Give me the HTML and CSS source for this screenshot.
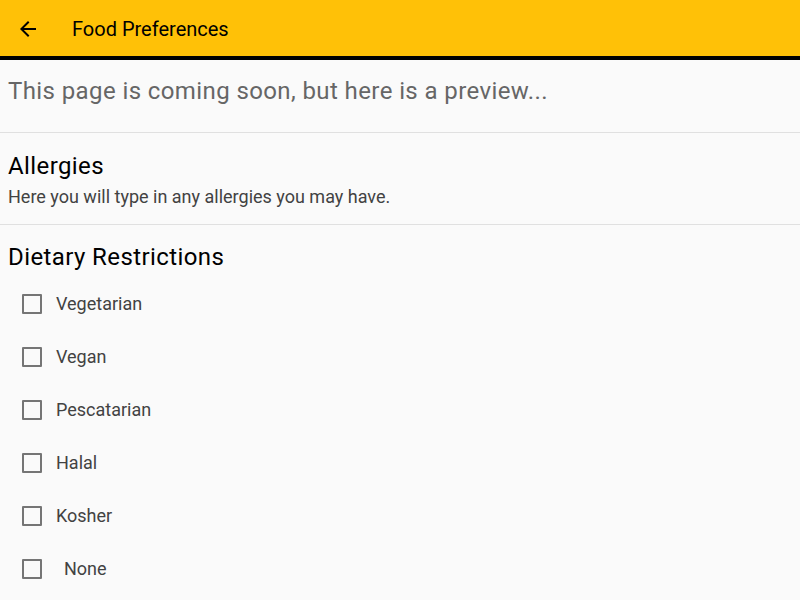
FILE: index.html
```html
<!DOCTYPE html>
<html>
<head>
<meta charset="utf-8">
<link rel="stylesheet" href="styles.css">
</head>
<body>
<header class="appbar">
  <svg class="back" width="24" height="24" viewBox="0 0 24 24"><path d="M20 11H7.83l5.59-5.59L12 4l-8 8 8 8 1.41-1.41L7.83 13H20v-2z" fill="#000"/></svg>
  <h1 class="title">Food Preferences</h1>
</header>
<main>
  <p class="notice">This page is coming soon, but here is a preview...</p>
  <section class="section allergies">
    <h2 class="heading">Allergies</h2>
    <p class="sub">Here you will type in any allergies you may have.</p>
  </section>
  <section class="section diet">
    <h2 class="heading">Dietary Restrictions</h2>
    <ul class="options">
      <li class="option"><span class="box"></span><span class="label">Vegetarian</span></li>
      <li class="option"><span class="box"></span><span class="label">Vegan</span></li>
      <li class="option"><span class="box"></span><span class="label">Pescatarian</span></li>
      <li class="option"><span class="box"></span><span class="label">Halal</span></li>
      <li class="option"><span class="box"></span><span class="label">Kosher</span></li>
      <li class="option"><span class="box"></span><span class="label indent">None</span></li>
    </ul>
  </section>
</main>
</body>
</html>
```

FILE: styles.css
```css
* { box-sizing: border-box; }
html, body { margin: 0; padding: 0; }
body {
  width: 800px;
  height: 600px;
  overflow: hidden;
  background: #fafafa;
  font-family: Roboto, "Liberation Sans", sans-serif;
  color: #000;
}
.appbar {
  height: 60px;
  background: #ffc107;
  border-bottom: 4px solid #000;
  display: flex;
  align-items: center;
  padding-left: 16px;
}
.back { display: block; flex: none; margin-top: 1px; }
.title {
  margin: 2px 0 0 32px;
  font-size: 20px;
  font-weight: 400;
  line-height: 24px;
  color: #000;
}
.notice {
  margin: 0;
  padding: 15px 8px 25px;
  font-size: 24px;
  line-height: 32px;
  letter-spacing: 0.4px;
  color: #666;
  border-bottom: 1px solid #e0e0e0;
}
.section { padding: 17px 8px 16px; }
.allergies { border-bottom: 1px solid #e0e0e0; }
.diet { padding-top: 16px; }
.heading {
  margin: 0;
  font-size: 24px;
  font-weight: 400;
  line-height: 32px;
  letter-spacing: 0.4px;
  color: #000;
}
.sub {
  margin: 4px 0 0;
  font-size: 18px;
  line-height: 22px;
  color: #424242;
}
.options {
  list-style: none;
  margin: 4px 0 0;
  padding: 0;
}
.option {
  height: 53px;
  display: flex;
  align-items: center;
  padding-left: 14px;
}
.box {
  width: 20px;
  height: 20px;
  border: 2px solid #757575;
  border-radius: 1px;
  flex: none;
}
.label {
  margin-left: 14px;
  font-size: 18px;
  color: #424242;
}
.label.indent { margin-left: 22px; }
```
